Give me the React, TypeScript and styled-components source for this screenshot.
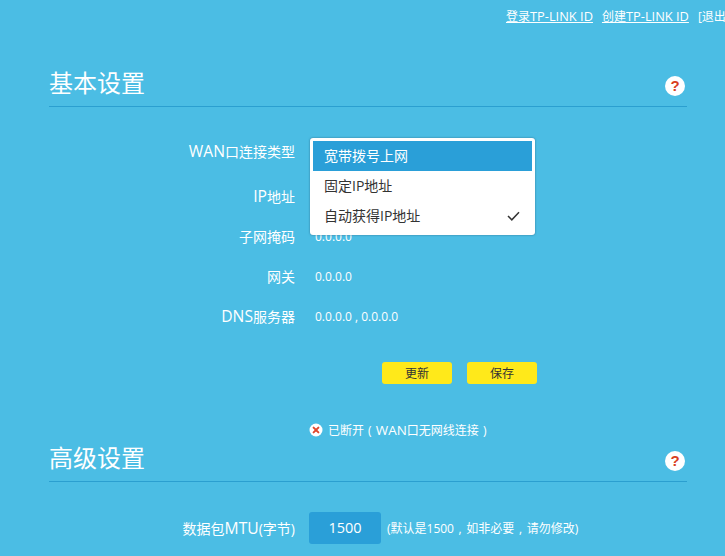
import * as React from 'react';
import styled, { createGlobalStyle } from 'styled-components';

const GlobalStyle = createGlobalStyle`
  html, body {
    margin: 0;
    padding: 0;
    width: 725px;
    height: 556px;
    overflow: hidden;
    background: #4bbde4;
    font-family: "Open Sans", "Noto Sans CJK SC", sans-serif;
  }
`

const Page = styled.div`
  width: 725px;
  height: 556px;
  overflow: hidden;
  color: #fff;
`

const TopBar = styled.div`
  height: 31px;
  display: flex;
  align-items: center;
  gap: 9px;
  padding: 0 0 2px 506px;
  white-space: nowrap;
  font-size: 12px;
`

const TopLink = styled.a`
  color: #fff;
  text-decoration: underline;
`

const TopPlain = styled.span`
  color: #fff;
`

// latin runs sit a bit wider than the CJK around them
const Latin = styled.span<{ $scale: number }>`
  font-size: ${p => p.$scale}em;
  line-height: 1;
`

const Section = styled.div`
  margin: 0 38px 0 49px;
`

const SectionHead = styled.div`
  display: flex;
  justify-content: space-between;
  align-items: flex-end;
  height: 73px;
  border-bottom: 1px solid #2b9fd0;
  padding-right: 2px;
`

const SecondHead = styled(SectionHead)`
  height: 43px;
`

const SectionTitle = styled.h2`
  margin: 0 0 6px;
  font-size: 24px;
  line-height: 34px;
  font-weight: normal;
`

const HelpIcon = styled.span`
  width: 20px;
  height: 20px;
  margin-bottom: 10px;
  border-radius: 50%;
  background: #fff;
  color: #d9401f;
  font-family: "Liberation Sans", sans-serif;
  font-size: 15px;
  font-weight: bold;
  text-align: center;
  line-height: 20px;
`

const Rows = styled.div`
  padding-top: 24px;
  position: relative;
`

const Row = styled.div<{ $h: number }>`
  display: flex;
  align-items: center;
  height: ${p => p.$h}px;
`

const Label = styled.div`
  width: 246px;
  text-align: right;
  font-size: 14px;
`

const Value = styled.div`
  margin-left: 20px;
  font-size: 12px;
`

const Menu = styled.div`
  position: absolute;
  left: 261px;
  top: 31px;
  width: 225px;
  height: 97px;
  box-sizing: border-box;
  padding: 3px;
  background: #fff;
  border-radius: 3px;
  box-shadow: 0 0 2px rgba(30, 70, 100, 0.7);
  color: #333;
  font-size: 14px;
`

const MenuItem = styled.div<{ $active?: boolean }>`
  height: 30px;
  line-height: 30px;
  padding: 0 12px 0 11px;
  display: flex;
  justify-content: space-between;
  align-items: center;
  background: ${p => (p.$active ? '#2a9fd8' : 'transparent')};
  color: ${p => (p.$active ? '#fff' : '#333')};
`

const Buttons = styled.div`
  display: flex;
  gap: 15px;
  margin-left: 333px;
  margin-top: 31px;
`

const YellowButton = styled.button`
  width: 70px;
  height: 22px;
  border: 0;
  border-radius: 3px;
  background: #ffe91a;
  color: #333;
  font-family: inherit;
  font-size: 12px;
  padding: 0;
`

const Status = styled.div`
  display: flex;
  align-items: center;
  gap: 5px;
  margin: 38px 0 0 260px;
  font-size: 12px;
  word-spacing: 1px;
  height: 16px;
`

const MtuRow = styled.div`
  display: flex;
  align-items: center;
  height: 32px;
  margin-top: 30px;
`

const MtuInput = styled.div`
  width: 72px;
  height: 32px;
  margin-left: 14px;
  background: #2a9fd8;
  border-radius: 3px;
  text-align: center;
  line-height: 32px;
  font-size: 14.5px;
`

const Hint = styled.div`
  margin-left: 6px;
  font-size: 12px;
  word-spacing: 1.5px;
  white-space: nowrap;
`

const StopIcon = () => (
  <svg width="14" height="14" viewBox="0 0 14 14">
    <circle cx="7" cy="7" r="6.5" fill="#fff" />
    <path d="M4.6 4.6l4.8 4.8M9.4 4.6l-4.8 4.8" stroke="#e0492f" strokeWidth="2" strokeLinecap="round" />
  </svg>
)

const Check = () => (
  <svg width="13" height="10" viewBox="0 0 13 10">
    <path d="M1 5l3.8 3.8L12 1.2" fill="none" stroke="#333" strokeWidth="1.5" />
  </svg>
)

export default function App() {
  return (
    <Page>
      <GlobalStyle />
      <TopBar>
        <TopLink>登录<Latin $scale={1.07}>TP-LINK ID</Latin></TopLink>
        <TopLink>创建<Latin $scale={1.07}>TP-LINK ID</Latin></TopLink>
        <TopPlain>[退出</TopPlain>
      </TopBar>
      <Section>
        <SectionHead>
          <SectionTitle>基本设置</SectionTitle>
          <HelpIcon>?</HelpIcon>
        </SectionHead>
        <Rows>
          <Row $h={40}><Label><Latin $scale={1.12}>WAN</Latin>口连接类型</Label></Row>
          <Row $h={50}><Label><Latin $scale={1.12}>IP</Latin>地址</Label></Row>
          <Row $h={30}><Label>子网掩码</Label><Value>0.0.0.0</Value></Row>
          <Row $h={50}><Label>网关</Label><Value>0.0.0.0</Value></Row>
          <Row $h={30}><Label><Latin $scale={1.12}>DNS</Latin>服务器</Label><Value>0.0.0.0 , 0.0.0.0</Value></Row>
          <Menu>
            <MenuItem $active>宽带拨号上网</MenuItem>
            <MenuItem>固定IP地址</MenuItem>
            <MenuItem>自动获得IP地址<Check /></MenuItem>
          </Menu>
        </Rows>
        <Buttons>
          <YellowButton>更新</YellowButton>
          <YellowButton>保存</YellowButton>
        </Buttons>
        <Status><StopIcon /><span>已断开 ( <Latin $scale={1.12}>WAN</Latin>口无网线连接 )</span></Status>
        <SecondHead>
          <SectionTitle>高级设置</SectionTitle>
          <HelpIcon>?</HelpIcon>
        </SecondHead>
        <MtuRow>
          <Label>数据包<Latin $scale={1.12}>MTU</Latin>(字节)</Label>
          <MtuInput>1500</MtuInput>
          <Hint>(默认是1500 , 如非必要 , 请勿修改)</Hint>
        </MtuRow>
      </Section>
    </Page>
  );
}
